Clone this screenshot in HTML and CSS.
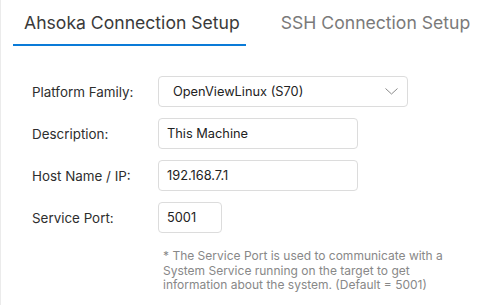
FILE: index.html
```html
<!DOCTYPE html>
<html>
<head>
  <link rel="stylesheet" href="styles.css">
</head>
<body>
  <div class="panel">
    <div class="tabs">
      <div class="tab active">Ahsoka Connection Setup</div>
      <div class="tab">SSH Connection Setup</div>
    </div>

    <form class="setup">
      <label class="label">Platform Family:</label>
      <div class="select">
        <span>OpenViewLinux (S70)</span>
        <svg class="chevron" width="13" height="7" viewBox="0 0 13 7">
          <path d="M0.5 0.5 L6.5 6 L12.5 0.5" fill="none" stroke="#8a8a8a" stroke-width="1"/>
        </svg>
      </div>

      <label class="label">Description:</label>
      <input class="field wide" type="text" value="This Machine">

      <label class="label">Host Name / IP:</label>
      <input class="field wide" type="text" value="192.168.7.1">

      <label class="label">Service Port:</label>
      <input class="field port" type="text" value="5001">

      <p class="note">* The Service Port is used to communicate with a System Service running on the target to get information about the system. (Default = 5001)</p>
    </form>
  </div>
</body>
</html>
```

FILE: styles.css
```css
body {
  margin: 0;
  font-family: Inter, "Noto Sans", sans-serif;
  background: #fff;
}

.panel {
  height: 305px;
  border-left: 1px solid #ebebeb;
  box-sizing: border-box;
}

.tabs {
  display: flex;
  padding-left: 12px;
  padding-top: 9px;
}

.tab {
  font-size: 17.6px;
  white-space: nowrap;
  color: #7a7a7a;
  padding: 0 6px 0 11px;
  height: 35px;
  line-height: 28px;
  margin-right: 24px;
}

.tab.active {
  color: #3a3a3a;
  border-bottom: 2px solid #0a7bd8;
}

.setup {
  display: grid;
  grid-template-columns: 126px auto;
  align-items: center;
  row-gap: 11px;
  padding: 30px 0 0 31px;
  margin: 0;
}

.label {
  font-size: 13.4px;
  color: #2e2e2e;
}

.select {
  width: 250px;
  height: 31px;
  box-sizing: border-box;
  border: 1px solid #dcdcdc;
  border-radius: 4px;
  display: flex;
  align-items: center;
  justify-content: space-between;
  padding: 0 9px 0 14px;
  font-size: 12.8px;
  color: #222;
}

.field {
  height: 31px;
  box-sizing: border-box;
  border: 1px solid #dcdcdc;
  border-radius: 4px;
  padding: 0 8px;
  font-family: inherit;
  font-size: 12.8px;
  color: #222;
  outline: none;
}

.wide {
  width: 200px;
}

.port {
  width: 64px;
}

.note {
  grid-column: 2;
  margin: 5px 0 0 5px;
  font-size: 12px;
  line-height: 14.5px;
  color: #888;
  width: 290px;
}
```
